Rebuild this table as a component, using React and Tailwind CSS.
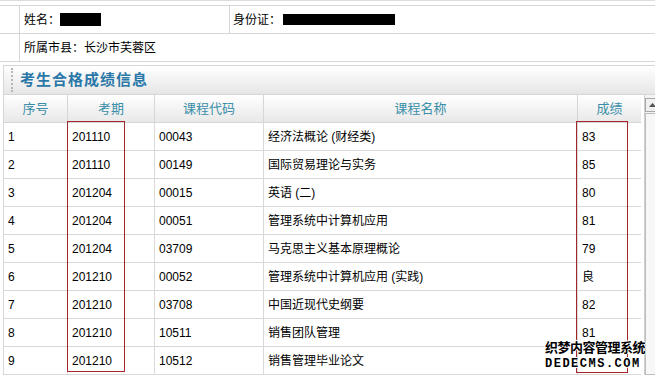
import React from 'react';

const rows = [
  ['1', '201110', '00043', '经济法概论 (财经类)', '83'],
  ['2', '201110', '00149', '国际贸易理论与实务', '85'],
  ['3', '201204', '00015', '英语 (二)', '80'],
  ['4', '201204', '00051', '管理系统中计算机应用', '81'],
  ['5', '201204', '03709', '马克思主义基本原理概论', '79'],
  ['6', '201210', '00052', '管理系统中计算机应用 (实践)', '良'],
  ['7', '201210', '03708', '中国近现代史纲要', '82'],
  ['8', '201210', '10511', '销售团队管理', '81'],
  ['9', '201210', '10512', '销售管理毕业论文', ''],
];

const cols = 'grid grid-cols-[64px_87px_109px_314px_63px]';

const App = () => {
  return (
    <div
      className="w-[655px] h-[378px] overflow-hidden bg-white relative text-[12px] text-black"
      style={{ fontFamily: '"Liberation Sans", "Noto Sans CJK SC", sans-serif' }}
    >
      {/* info block */}
      <div className="border-t border-[#dcdcdc] mt-0 pt-[4px]">
        <div className="border-t border-[#d6d6d6]">
          <div className="flex h-[28px] border-b border-[#d6d6d6]">
            <div className="w-[20px] border-r border-[#d6d6d6]"></div>
            <div className="w-[210px] border-r border-[#d6d6d6] flex items-center pl-[4px]">
              姓名：<span className="inline-block w-[41px] h-[13px] bg-black"></span>
            </div>
            <div className="flex-1 flex items-center pl-[3px]">
              身份证：<span className="inline-block w-[112px] h-[11px] bg-black ml-[2px]"></span>
            </div>
          </div>
          <div className="flex h-[28px] border-b border-[#d6d6d6]">
            <div className="w-[20px] border-r border-[#d6d6d6]"></div>
            <div className="flex-1 flex items-center pl-[4px]">所属市县：长沙市芙蓉区</div>
          </div>
        </div>
      </div>

      {/* panel */}
      <div className="mt-[3px] ml-[3px] border-l border-t border-[#d6d6d6] flex">
        <div className="flex-1">
          <div className="h-[29px] flex items-center bg-gradient-to-b from-white to-[#e6e6e6] border-b border-[#d6d6d6]">
            <div className="w-[2px] h-[24px] ml-[7px] mr-[7px] border-l-2 border-dotted border-[#b5b5b5]"></div>
            <span className="text-[15px] font-bold text-[#2a78a8] tracking-[1px]">考生合格成绩信息</span>
          </div>

          <div className="flex">
            <div className="w-[637px]">
              <div className={`${cols} h-[28px] bg-gradient-to-b from-white to-[#e8e8e8] border-b border-[#d6d6d6] text-[13px] text-[#3a8fa8]`}>
                {['序号', '考期', '课程代码', '课程名称', '成绩'].map((h, i) => (
                  <div
                    key={h}
                    className={`flex items-center justify-center ${i < 4 ? 'border-r border-[#d6d6d6]' : ''}`}
                  >
                    {h}
                  </div>
                ))}
              </div>
              {rows.map((r) => (
                <div key={r[0]} className={`${cols} h-[28px] border-b border-[#d9d9d9]`}>
                  {r.map((c, i) => (
                    <div
                      key={i}
                      className={`flex items-center pl-[4px] ${i < 4 ? 'border-r border-[#d9d9d9]' : ''}`}
                    >
                      {c}
                    </div>
                  ))}
                </div>
              ))}
            </div>
            {/* scrollbar */}
            <div className="w-[15px] ml-[3px] border-l border-[#cfcfcf] bg-[#f4f4f4] flex flex-col">
              <div className="h-[14px] mt-[3px] border border-[#a8a8a8] bg-[#f0f0f0] flex items-center justify-center">
                <svg width="7" height="4" viewBox="0 0 7 4">
                  <path d="M0 4 L3.5 0 L7 4 Z" fill="#555" />
                </svg>
              </div>
              <div className="flex-1 mt-[1px] border border-[#bdbdbd] bg-[#f7f7f7]"></div>
            </div>
          </div>
        </div>
      </div>

      {/* red marks */}
      <div className="absolute left-[67px] top-[121px] w-[58px] h-[251px] border border-[#a3262b]"></div>
      <div className="absolute left-[576px] top-[121px] w-[52px] h-[252px] border border-[#a3262b]"></div>

      {/* watermark */}
      <div
        className="absolute left-[545px] top-[340px] leading-[16px] font-bold text-black"
        style={{ textShadow: '1px 0 #fff, -1px 0 #fff, 0 1px #fff, 0 -1px #fff' }}
      >
        <div className="text-[13px] tracking-[-0.5px] whitespace-nowrap">织梦内容管理系统</div>
        <div className="text-[12px] tracking-[1.5px] whitespace-nowrap" style={{ fontFamily: '"Liberation Mono", monospace' }}>DEDECMS.COM</div>
      </div>
    </div>
  );
};

export default App;
